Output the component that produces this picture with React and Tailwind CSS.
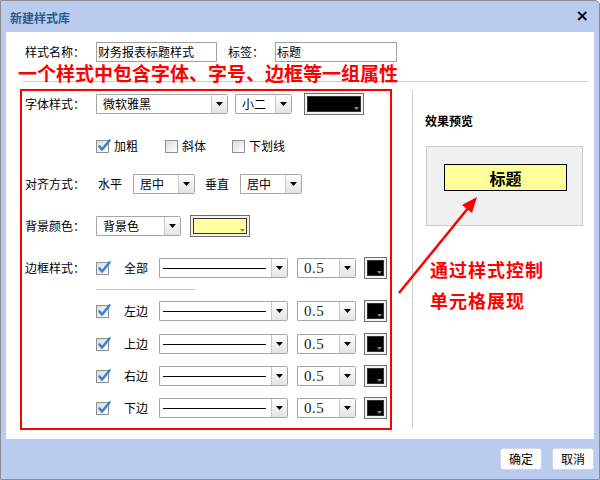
import React from "react";

const CJK = { fontFamily: '"Noto Sans CJK SC", "Noto Sans", sans-serif' };

function Arrow() {
  return (
    <svg width="7" height="4" viewBox="0 0 7 4" className="block">
      <path d="M0 0 H7 L3.5 4 Z" fill="#000" />
    </svg>
  );
}

function Select({ w, text, children, serif }) {
  return (
    <div
      className="flex h-[20px] border border-[#a6a6a6] bg-white rounded-r-[2px]"
      style={{ width: w }}
    >
      <div className="flex-1 flex items-center pl-[6px] overflow-hidden">
        {children ? (
          children
        ) : (
          <span
            className={serif ? "text-[15px] leading-[18px] text-[#222]" : "text-[12px] leading-[18px] text-black"}
            style={serif ? { fontFamily: '"Liberation Serif", "DejaVu Serif", serif', letterSpacing: "0.5px" } : CJK}
          >
            {text}
          </span>
        )}
      </div>
      <div className="w-[16px] flex items-center justify-center border-l border-[#c8c8c8] bg-gradient-to-b from-[#ffffff] to-[#e4e4e4]">
        <Arrow />
      </div>
    </div>
  );
}

function ColorBox({ w, h, color }) {
  return (
    <div
      className="border border-[#6e6e6e] bg-[#f3f3f3] p-[2px]"
      style={{ width: w, height: h }}
    >
      <div className="relative w-full h-full border border-[#333]" style={{ background: color }}>
        <div className="absolute right-[1px] bottom-[1px] w-[6px] h-[4px] flex items-center justify-center">
          <svg width="5" height="3" viewBox="0 0 5 3"><path d="M0 0H5L2.5 3Z" fill="#888" /></svg>
        </div>
      </div>
    </div>
  );
}

function Checkbox({ checked }) {
  return (
    <div className="relative w-[13px] h-[13px] border border-[#8f8f8f] bg-gradient-to-br from-[#dcdcdc] to-[#ffffff] shrink-0">
      {checked && (
        <svg width="15" height="15" viewBox="0 0 15 15" className="absolute left-[0px] top-[-3px]">
          <path d="M2.5 8.5 L5 11.5 L12.5 2.5" stroke="#2f86d6" strokeWidth="2.6" fill="none" strokeLinecap="round" strokeLinejoin="round" />
        </svg>
      )}
    </div>
  );
}

function Label({ children, className = "" }) {
  return (
    <span className={"text-[12px] leading-[16px] text-black whitespace-nowrap " + className} style={CJK}>
      {children}
    </span>
  );
}

function BorderRow({ label, className = "" }) {
  return (
    <div className={"flex items-center h-[24px] " + className}>
      <div className="w-[74px]" />
      <Checkbox checked />
      <Label className="ml-[15px] w-[24px]">{label}</Label>
      <div className="ml-[11px]">
        <Select w={129}>
          <div className="w-[103px] h-px bg-black ml-[-3px]" />
        </Select>
      </div>
      <div className="ml-[9px]">
        <Select w={59} text="0.5" serif />
      </div>
      <div className="ml-[8px]">
        <ColorBox w={23} h={22} color="#000" />
      </div>
    </div>
  );
}

export default function App() {
  return (
    <div className="relative w-[600px] h-[480px] bg-[#b9cbee] border border-[#8c8c8c] rounded-tr-[5px] flex flex-col overflow-hidden" style={CJK}>
      {/* title bar */}
      <div className="h-[31px] flex items-center justify-between pl-[9px] pr-[10px]">
        <span className="text-[12px] font-bold text-[#2a5b8f] mt-[2px]" style={CJK}>新建样式库</span>
        <span className="text-[16px] font-bold leading-none text-black mb-[2px]" style={{ fontFamily: '"DejaVu Sans", sans-serif' }}>×</span>
      </div>

      {/* white content */}
      <div className="mx-[5px] h-[407px] bg-white flex flex-col">
        {/* name row */}
        <div className="flex items-center mt-[10px] h-[20px] pl-[19px]">
          <Label className="w-[71px]">样式名称：</Label>
          <div className="w-[121px] h-[20px] border border-[#a0a0a0] flex items-center pl-[1px]">
            <Label>财务报表标题样式</Label>
          </div>
          <Label className="ml-[11px] w-[47px]">标签：</Label>
          <div className="w-[122px] h-[20px] border border-[#a0a0a0] flex items-center pl-[1px]">
            <Label>标题</Label>
          </div>
        </div>

        {/* red annotation + gray line */}
        <div className="ml-[17px] mr-[6px] h-[20px] border-b border-[#c9cdd1]">
          <div className="ml-[-5px] text-[19px] leading-[22px] font-bold text-[#ff0000] whitespace-nowrap" style={CJK}>
            一个样式中包含字体、字号、边框等一组属性
          </div>
        </div>

        <div className="flex mt-[7px] ml-[14px]">
          {/* red box */}
          <div className="w-[372px] h-[341px] border-2 border-[#ff0000] flex flex-col pl-[3px]">
            {/* font row */}
            <div className="flex items-center h-[24px] mt-[1px]">
              <Label className="w-[71px]">字体样式：</Label>
              <Select w={132} text="微软雅黑" />
              <div className="ml-[7px]"><Select w={57} text="小二" /></div>
              <div className="ml-[12px]"><ColorBox w={60} h={22} color="#000" /></div>
            </div>
            {/* checkboxes */}
            <div className="flex items-center h-[14px] mt-[23px]">
              <div className="w-[71px]" />
              <Checkbox checked />
              <Label className="ml-[5px] w-[24px]">加粗</Label>
              <div className="ml-[27px]"><Checkbox /></div>
              <Label className="ml-[4px] w-[24px]">斜体</Label>
              <div className="ml-[26px]"><Checkbox /></div>
              <Label className="ml-[4px]">下划线</Label>
            </div>
            {/* align row */}
            <div className="flex items-center h-[20px] mt-[21px]">
              <Label className="w-[71px]">对齐方式：</Label>
              <Label className="ml-[2px] w-[24px]">水平</Label>
              <div className="ml-[11px]"><Select w={62} text="居中" /></div>
              <Label className="ml-[10px] w-[24px]">垂直</Label>
              <div className="ml-[11px]"><Select w={62} text="居中" /></div>
            </div>
            {/* bg row */}
            <div className="flex items-center h-[24px] mt-[20px]">
              <Label className="w-[71px]">背景颜色：</Label>
              <Select w={85} text="背景色" />
              <div className="ml-[9px]"><ColorBox w={60} h={22} color="#ffffa0" /></div>
            </div>
            {/* border all */}
            <div className="flex items-center h-[24px] mt-[18px]">
              <Label className="w-[71px]">边框样式：</Label>
              <Checkbox checked />
              <Label className="ml-[15px] w-[24px]">全部</Label>
              <div className="ml-[11px]">
                <Select w={129}>
                  <div className="w-[103px] h-px bg-black ml-[-3px]" />
                </Select>
              </div>
              <div className="ml-[9px]"><Select w={59} text="0.5" serif /></div>
              <div className="ml-[8px]"><ColorBox w={23} h={22} color="#000" /></div>
            </div>
            <div className="ml-[71px] w-[99px] h-px bg-[#c8c8c8] mt-[9px]" />
            <BorderRow label="左边" className="mt-[9px] -ml-[3px]" />
            <BorderRow label="上边" className="mt-[9px] -ml-[3px]" />
            <BorderRow label="右边" className="mt-[8px] -ml-[3px]" />
            <BorderRow label="下边" className="mt-[8px] -ml-[3px]" />
          </div>

          {/* right panel */}
          <div className="ml-[20px] mt-[1px] h-[338px] border-l border-[#c8cdd1] pl-[13px] flex flex-col">
            <span className="text-[12px] leading-[16px] font-bold text-black mt-[23px] -ml-[1px]" style={CJK}>效果预览</span>
            <div className="mt-[17px] w-[157px] h-[80px] bg-[#f0f0f0] border border-[#cccccc] pt-[17px] pl-[17px]">
              <div className="w-[123px] h-[27px] bg-[#ffff99] border border-black flex items-center justify-center">
                <span className="text-[16px] font-bold text-black leading-none" style={CJK}>标题</span>
              </div>
            </div>
            <div className="mt-[28px] ml-[4px] text-[18px] leading-[31px] font-bold text-[#ff0000] tracking-[1px]" style={CJK}>
              <div>通过样式控制</div>
              <div>单元格展现</div>
            </div>
          </div>
        </div>
      </div>

      {/* footer */}
      <div className="flex justify-end gap-[10px] mt-[9px] pr-[5px]">
        <button className="w-[42px] h-[22px] bg-[#fdfdfd] border border-[#d4d8de] rounded-[3px] text-[12px] text-black" style={CJK}>确定</button>
        <button className="w-[42px] h-[22px] bg-[#fdfdfd] border border-[#d4d8de] rounded-[3px] text-[12px] text-black" style={CJK}>取消</button>
      </div>

      {/* red arrow overlay */}
      <svg className="absolute left-0 top-0 pointer-events-none" width="600" height="480">
        <line x1="398" y1="292" x2="468" y2="206" stroke="#ff0000" strokeWidth="2.5" />
        <polygon points="476,196 471,212 461,204" fill="#ff0000" />
      </svg>
    </div>
  );
}
